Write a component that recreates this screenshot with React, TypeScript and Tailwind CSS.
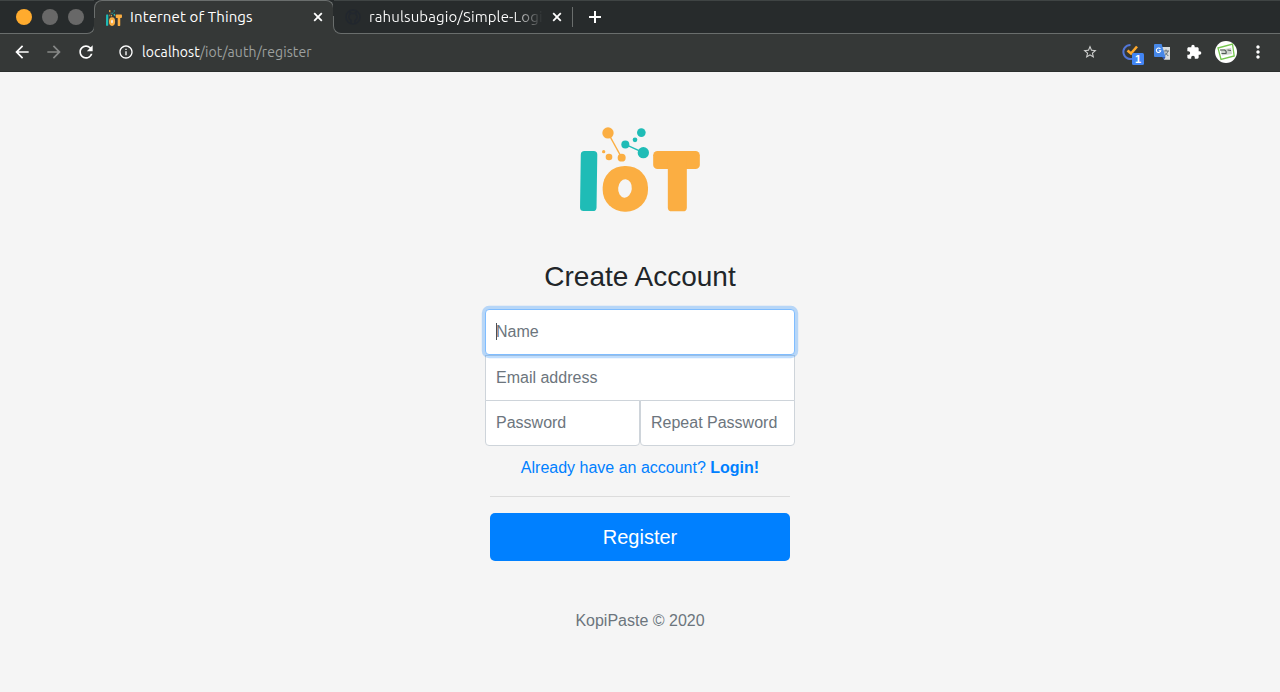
import React from "react";
import {
  MdArrowBack,
  MdArrowForward,
  MdExtension,
  MdInfoOutline,
  MdMoreVert,
  MdRefresh,
  MdStarBorder,
} from "react-icons/md";

function IotLogo({ className }: { className: string }) {
  return (
    <svg viewBox="45 34 360 258" className={className} aria-label="IoT" preserveAspectRatio="none">
      <g fill="#1fbcb6">
        <rect x="46" y="107" width="49.5" height="182" rx="11" transform="skewX(-0.8) translate(3 0)" />
        <path d="M181 87L235 112" stroke="#1fbcb6" strokeWidth="4" />
        <circle cx="181" cy="87" r="12" />
        <circle cx="235" cy="112" r="17" />
        <circle cx="229" cy="51" r="13" />
        <circle cx="210" cy="73" r="7" />
      </g>
      <g fill="#fbae42">
        <path d="M129 52L170 127" stroke="#fbae42" strokeWidth="4" />
        <circle cx="129" cy="52" r="17" />
        <circle cx="170" cy="127" r="12" />
        <circle cx="132" cy="125" r="10" />
        <circle cx="116" cy="109" r="5" />
        <rect x="113" y="152" width="136" height="139" rx="66" ry="66" />
        <rect x="264.5" y="106.5" width="140" height="55" rx="13" />
        <rect x="308.5" y="120" width="57" height="170" rx="12" />
      </g>
      <ellipse cx="180" cy="220.5" rx="20.5" ry="28" fill="#f5f5f5" transform="rotate(5 180 220)" />
    </svg>
  );
}

function CloseIcon({ className }: { className: string }) {
  return (
    <svg viewBox="0 0 14 14" className={className} stroke="#fff" strokeWidth="1.8">
      <path d="M3.2 3.2L10.8 10.8M10.8 3.2L3.2 10.8" />
    </svg>
  );
}

function TabStrip() {
  return (
    <div className="flex h-[34px] border-t border-[#3f4444] bg-[#272b2c] text-white">
      <div className="relative w-[95px] bg-[linear-gradient(#272b2c_50%,#353837_50%)] after:absolute after:bottom-0 after:right-0 after:h-[18px] after:w-full after:rounded-br-[8px] after:border-b after:border-r after:border-[#6a6e6d] after:bg-[#272b2c]">
        <div className="relative z-10 flex gap-[10px] pl-4 pt-2">
          <span className="size-4 rounded-full bg-[#ffab2e]" />
          <span className="size-4 rounded-full bg-[#686868]" />
          <span className="size-4 rounded-full bg-[#686868]" />
        </div>
      </div>
      <div className="relative -ml-px -mt-px flex w-[240px] items-center bg-[linear-gradient(#272b2c_50%,#353837_50%)] before:absolute before:inset-x-0 before:top-0 before:h-[18px] before:rounded-t-[8px] before:border-x before:border-t before:border-[#6a6e6d] before:bg-[#353837]">
        <IotLogo className="relative ml-3 mt-px h-[16px] w-[16px]" />
        <span className="relative ml-2 w-[170px] whitespace-nowrap text-[15px] leading-5 tracking-[0.12px]">Internet of Things</span>
        <CloseIcon className="relative ml-[11px] size-[14px]" />
      </div>
      <div className="relative -ml-px flex flex-1 items-center bg-[linear-gradient(#272b2c_50%,#353837_50%)] pb-px before:absolute before:bottom-0 before:left-0 before:h-[18px] before:w-full before:rounded-bl-[8px] before:border-b before:border-l before:border-[#6a6e6d] before:bg-[#272b2c]">
        <svg viewBox="0 0 16 16" className="relative ml-3 size-4" fill="none" stroke="#22272e" strokeWidth="1.5">
          <circle cx="8" cy="8" r="7" />
          <path d="M6 15V11.5C3 10 3.5 6.5 5 5.5L5 3.5L7 4.5H9L11 3.5V5.5C13 7 12 10.5 10 11.5V15" />
        </svg>
        <span className="relative ml-2 w-[174px] whitespace-nowrap bg-[linear-gradient(90deg,#fff_82%,transparent)] bg-clip-text text-[15px] leading-5 tracking-[0.12px] text-transparent">
          rahulsubagio/Simple-Logi
        </span>
        <CloseIcon className="relative ml-[7px] size-[14px]" />
        <span className="relative ml-2 h-5 w-px bg-[#6a6e6d]" />
        <svg viewBox="0 0 12 12" className="relative ml-4 size-3" fill="#fff">
          <path d="M5 0H7V5H12V7H7V12H5V7H0V5H5Z" />
        </svg>
      </div>
    </div>
  );
}

function Toolbar() {
  return (
    <div className="flex h-[38px] items-center border-b border-[#2b2e2d] bg-[#353837] pb-px text-white">
      <MdArrowBack className="ml-3 size-5" />
      <MdArrowForward className="ml-3 size-5 text-[#868887]" />
      <MdRefresh className="ml-3 size-5" />
      <MdInfoOutline className="ml-[22px] size-4" />
      <span className="ml-[8px] whitespace-nowrap text-[14px] leading-5 tracking-[0.09px]">
        localhost<span className="text-[#9da09f]">/iot/auth/register</span>
      </span>
      <div className="ml-auto flex items-center">
        <MdStarBorder className="size-4 text-[#d0d1d0]" />
        <svg viewBox="0 0 26 28" className="ml-[22px] h-7 w-[26px]">
          <path d="M10.5 7A7 7 0 1 0 14 20" fill="none" stroke="#5276d8" strokeWidth="2" />
          <path d="M7.5 12.5L11 15.5L17 8.5" fill="none" stroke="#ffa92c" strokeWidth="2.6" />
          <rect x="12" y="15" width="12" height="12" rx="1.5" fill="#4285f4" />
          <text x="18" y="25" textAnchor="middle" fontSize="11" fontWeight="700" fill="#fff" fontFamily="Liberation Sans">1</text>
        </svg>
        <svg viewBox="0 0 16 16" className="ml-[8px] size-4">
          <path d="M7 3H16V15.7H10Z" fill="#d9dcdc" />
          <path d="M9.5 7H15M12 5.5V7M14 7Q13 10.5 10 12M11 8.5L14.3 12" fill="none" stroke="#637179" strokeWidth="1" />
          <path d="M1 0H7.6L11.5 13H1Q0 13 0 12V1Q0 0 1 0Z" fill="#4788e8" />
          <path d="M8 13H11.5L10 15.7Z" fill="#3159b8" />
          <path d="M6.4 5A2.2 2.2 0 1 0 6.7 6.8H4.8" fill="none" stroke="#fff" strokeWidth="1.1" />
        </svg>
        <MdExtension className="ml-4 size-4" />
        <svg viewBox="0 0 22 22" className="ml-[13px] size-[22px]">
          <circle cx="11" cy="11" r="11" fill="#fff" />
          <path d="M3 7L17.5 3L19.2 15L6 18.5Z" fill="none" stroke="#76c850" strokeWidth="1.3" />
          <path d="M5.5 8.5L16 7L17 13L7 14.5Z" fill="#ccd3cc" />
          <path d="M5 9H9.5Q12 10 11 12.5H6.5M12.5 9L16 9.5" fill="none" stroke="#525b57" strokeWidth="1.1" />
        </svg>
        <MdMoreVert className="ml-[11px] mr-3 size-5" />
      </div>
    </div>
  );
}

const field =
  "relative h-[46px] min-w-0 border bg-white px-[10px] text-[16px] leading-6 text-[#495057] placeholder:text-[#6c757d] outline-none";

function RegisterForm() {
  return (
    <form className="flex w-[300px] flex-col items-center">
      <IotLogo className="h-[85px] w-[120px]" />
      <h1 className="mt-12 text-[28px] leading-[34px] text-[#212529]">Create Account</h1>
      <div className="mt-[15px] flex w-[310px] flex-col">
        <div className="relative z-10 flex">
          <input className={`${field} flex-1 rounded border-[#80bdff] shadow-[0_0_0_3.2px_rgba(0,123,255,0.25)]`} placeholder="Name" />
          <span className="absolute left-[11px] top-[14px] h-[17px] w-px bg-[#495057]" />
        </div>
        <input className={`${field} border-[#ced4da]`} placeholder="Email address" />
        <div className="-mt-px flex">
          <input className={`${field} w-[155px] rounded-b border-[#ced4da]`} placeholder="Password" />
          <input className={`${field} w-[155px] rounded-b border-[#ced4da]`} placeholder="Repeat Password" />
        </div>
      </div>
      <a className="mt-[10px] whitespace-nowrap text-[16px] leading-6 text-[#0080ff]">
        Already have an account? <b>Login!</b>
      </a>
      <hr className="mt-4 w-full border-[#dcdcdc]" />
      <button type="button" className="mt-4 h-12 w-full rounded-[5px] bg-[#0080ff] text-[20px] leading-[30px] text-white">
        Register
      </button>
      <p className="mt-12 text-[16px] leading-6 text-[#6c757d]">KopiPaste © 2020</p>
    </form>
  );
}

export default function App() {
  return (
    <div className="flex h-[692px] w-[1280px] flex-col overflow-hidden bg-[#f5f5f5]">
      <header className="font-['Ubuntu','Noto_Sans',sans-serif]">
        <TabStrip />
        <Toolbar />
      </header>
      <main className="flex flex-1 justify-center pt-[55px] font-['Liberation_Sans',sans-serif]">
        <RegisterForm />
      </main>
    </div>
  );
}
